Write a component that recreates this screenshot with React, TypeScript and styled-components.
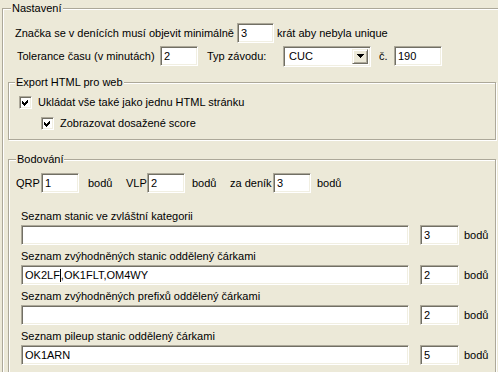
import styled, {createGlobalStyle} from "styled-components";

const GlobalStyle = createGlobalStyle`
  html, body {
    margin: 0;
    padding: 0;
    background: #ece9d8;
    overflow: hidden;
  }
  body {
    font-family: "Liberation Sans", Arial, sans-serif;
    font-size: 11px;
    color: #000;
  }
`;

const Page = styled.div`
  width: 498px;
  height: 372px;
  overflow: hidden;
  padding: 8px 0 0 2px;
  box-sizing: border-box;
`;

const GroupBox = styled.div<{$w: number; $h: number; $pad: string; $mt?: number; $ml?: number}>`
  position: relative;
  width: ${(p) => p.$w}px;
  height: ${(p) => p.$h}px;
  padding: ${(p) => p.$pad};
  margin-top: ${(p) => p.$mt ?? 0}px;
  margin-left: ${(p) => p.$ml ?? 0}px;
  border: 1px solid #aca899;
  box-shadow: inset 1px 1px 0 #fff, 1px 1px 0 #fff;
  box-sizing: border-box;
`;

const Legend = styled.span<{$left: number}>`
  position: absolute;
  top: -7px;
  left: ${(p) => p.$left}px;
  padding: 0 1px;
  line-height: 13px;
  background: #ece9d8;
`;

const Row = styled.div<{$mt?: number; $ml?: number}>`
  display: flex;
  align-items: center;
  height: 20px;
  margin-top: ${(p) => p.$mt ?? 0}px;
  margin-left: ${(p) => p.$ml ?? 0}px;
`;

const Label = styled.span<{$w?: number; $ml?: number}>`
  flex: none;
  white-space: nowrap;
  line-height: 13px;
  width: ${(p) => (p.$w ? `${p.$w}px` : "auto")};
  margin-left: ${(p) => p.$ml ?? 0}px;
`;

const TextBox = styled.div<{$w: number; $ml?: number}>`
  flex: none;
  width: ${(p) => p.$w}px;
  height: 20px;
  margin-left: ${(p) => p.$ml ?? 0}px;
  box-sizing: border-box;
  background: #fff;
  border-top: 1px solid #aca899;
  border-left: 1px solid #aca899;
  border-right: 1px solid #fff;
  border-bottom: 1px solid #fff;
  box-shadow: inset 1px 1px 0 #716f64, inset -1px -1px 0 #f1efe2;
  padding: 3px 0 0 3px;
  line-height: 13px;
  white-space: nowrap;
  overflow: hidden;
`;

const Caret = styled.span`
  display: inline-block;
  width: 1px;
  height: 13px;
  background: #000;
  vertical-align: top;
`;

const Combo = styled.div<{$w: number; $ml?: number}>`
  flex: none;
  display: flex;
  width: ${(p) => p.$w}px;
  height: 21px;
  margin-left: ${(p) => p.$ml ?? 0}px;
  box-sizing: border-box;
  background: #fff;
  border-top: 1px solid #aca899;
  border-left: 1px solid #aca899;
  border-right: 1px solid #fff;
  border-bottom: 1px solid #fff;
  box-shadow: inset 1px 1px 0 #716f64, inset -1px -1px 0 #f1efe2;
  padding: 2px;
`;

const ComboText = styled.div`
  flex: 1;
  padding: 1px 0 0 3px;
  line-height: 13px;
`;

const DropButton = styled.div`
  flex: none;
  width: 16px;
  height: 15px;
  box-sizing: border-box;
  display: flex;
  align-items: center;
  justify-content: center;
  background: #ece9d8;
  border-top: 1px solid #f1efe2;
  border-left: 1px solid #f1efe2;
  border-right: 1px solid #716f64;
  border-bottom: 1px solid #716f64;
  box-shadow: inset 1px 1px 0 #fff, inset -1px -1px 0 #aca899;
`;

const CheckRow = styled.div<{$ml: number; $mt: number}>`
  display: flex;
  align-items: center;
  gap: 6px;
  height: 16px;
  margin-left: ${(p) => p.$ml}px;
  margin-top: ${(p) => p.$mt}px;
`;

const CheckBox = styled.span`
  flex: none;
  width: 13px;
  height: 13px;
  box-sizing: border-box;
  background: #fff;
  border-top: 1px solid #aca899;
  border-left: 1px solid #aca899;
  border-right: 1px solid #fff;
  border-bottom: 1px solid #fff;
  box-shadow: inset 1px 1px 0 #716f64, inset -1px -1px 0 #f1efe2;
  display: flex;
`;

const FieldList = styled.div`
  margin: 17px 0 0 5px;
  display: flex;
  flex-direction: column;
  gap: 5px;
`;

const Field = styled.div`
  display: flex;
  flex-direction: column;
  gap: 2px;
`;

const Check = () => (
  <CheckBox>
    <svg width="11" height="11" viewBox="0 0 11 11" shapeRendering="crispEdges">
      <polygon points="2,4 4,6 8,2 8,5 4,9 2,7" fill="#000" />
    </svg>
  </CheckBox>
);

const fields = [
  {label: "Seznam stanic ve zvláštní kategorii", value: "", points: "3"},
  {label: "Seznam zvýhodněných stanic oddělený čárkami", value: "OK2LF|,OK1FLT,OM4WY", points: "2"},
  {label: "Seznam zvýhodněných prefixů oddělený čárkami", value: "", points: "2"},
  {label: "Seznam pileup stanic oddělený čárkami", value: "OK1ARN", points: "5"},
];

const renderValue = (v: string) => {
  const i = v.indexOf("|");
  if (i < 0) return v;
  return (
    <>
      {v.slice(0, i)}
      <Caret />
      {v.slice(i + 1)}
    </>
  );
};

export default function App() {
  return (
    <Page>
      <GlobalStyle />
      <GroupBox $w={520} $h={400} $pad="14px 0 0 12px">
        <Legend $left={8}>Nastavení</Legend>
        <Row>
          <Label $w={222}>Značka se v denících musí objevit minimálně</Label>
          <TextBox $w={37}>3</TextBox>
          <Label $ml={3}>krát aby nebyla unique</Label>
        </Row>
        <Row $mt={3} $ml={2}>
          <Label $w={143}>Tolerance času (v minutách)</Label>
          <TextBox $w={38}>2</TextBox>
          <Label $w={76} $ml={9}>Typ závodu:</Label>
          <Combo $w={88}>
            <ComboText>CUC</ComboText>
            <DropButton>
              <svg width="7" height="4" viewBox="0 0 7 4" shapeRendering="crispEdges">
                <polygon points="0,0 7,0 3.5,4" fill="#000" />
              </svg>
            </DropButton>
          </Combo>
          <Label $w={15} $ml={8}>č.</Label>
          <TextBox $w={48}>190</TextBox>
        </Row>

        <GroupBox $w={488} $h={58} $pad="11px 0 0 10px" $mt={16} $ml={-7}>
          <Legend $left={6}>Export HTML pro web</Legend>
          <CheckRow $ml={0} $mt={0}>
            <Check />
            <span>Ukládat vše také jako jednu HTML stránku</span>
          </CheckRow>
          <CheckRow $ml={22} $mt={5}>
            <Check />
            <span>Zobrazovat dosažené score</span>
          </CheckRow>
        </GroupBox>

        <GroupBox $w={488} $h={260} $pad="13px 0 0 7px" $mt={19} $ml={-7}>
          <Legend $left={7}>Bodování</Legend>
          <Row>
            <Label $w={25}>QRP</Label>
            <TextBox $w={38}>1</TextBox>
            <Label $w={38} $ml={9}>bodů</Label>
            <Label $w={21}>VLP</Label>
            <TextBox $w={38}>2</TextBox>
            <Label $w={38} $ml={7}>bodů</Label>
            <Label $w={43}>za deník</Label>
            <TextBox $w={38}>3</TextBox>
            <Label $ml={6}>bodů</Label>
          </Row>
          <FieldList>
            {fields.map((f) => (
              <Field key={f.label}>
                <Label>{f.label}</Label>
                <Row>
                  <TextBox $w={388}>{renderValue(f.value)}</TextBox>
                  <TextBox $w={39} $ml={11}>{f.points}</TextBox>
                  <Label $ml={5}>bodů</Label>
                </Row>
              </Field>
            ))}
          </FieldList>
        </GroupBox>
      </GroupBox>
    </Page>
  );
}
